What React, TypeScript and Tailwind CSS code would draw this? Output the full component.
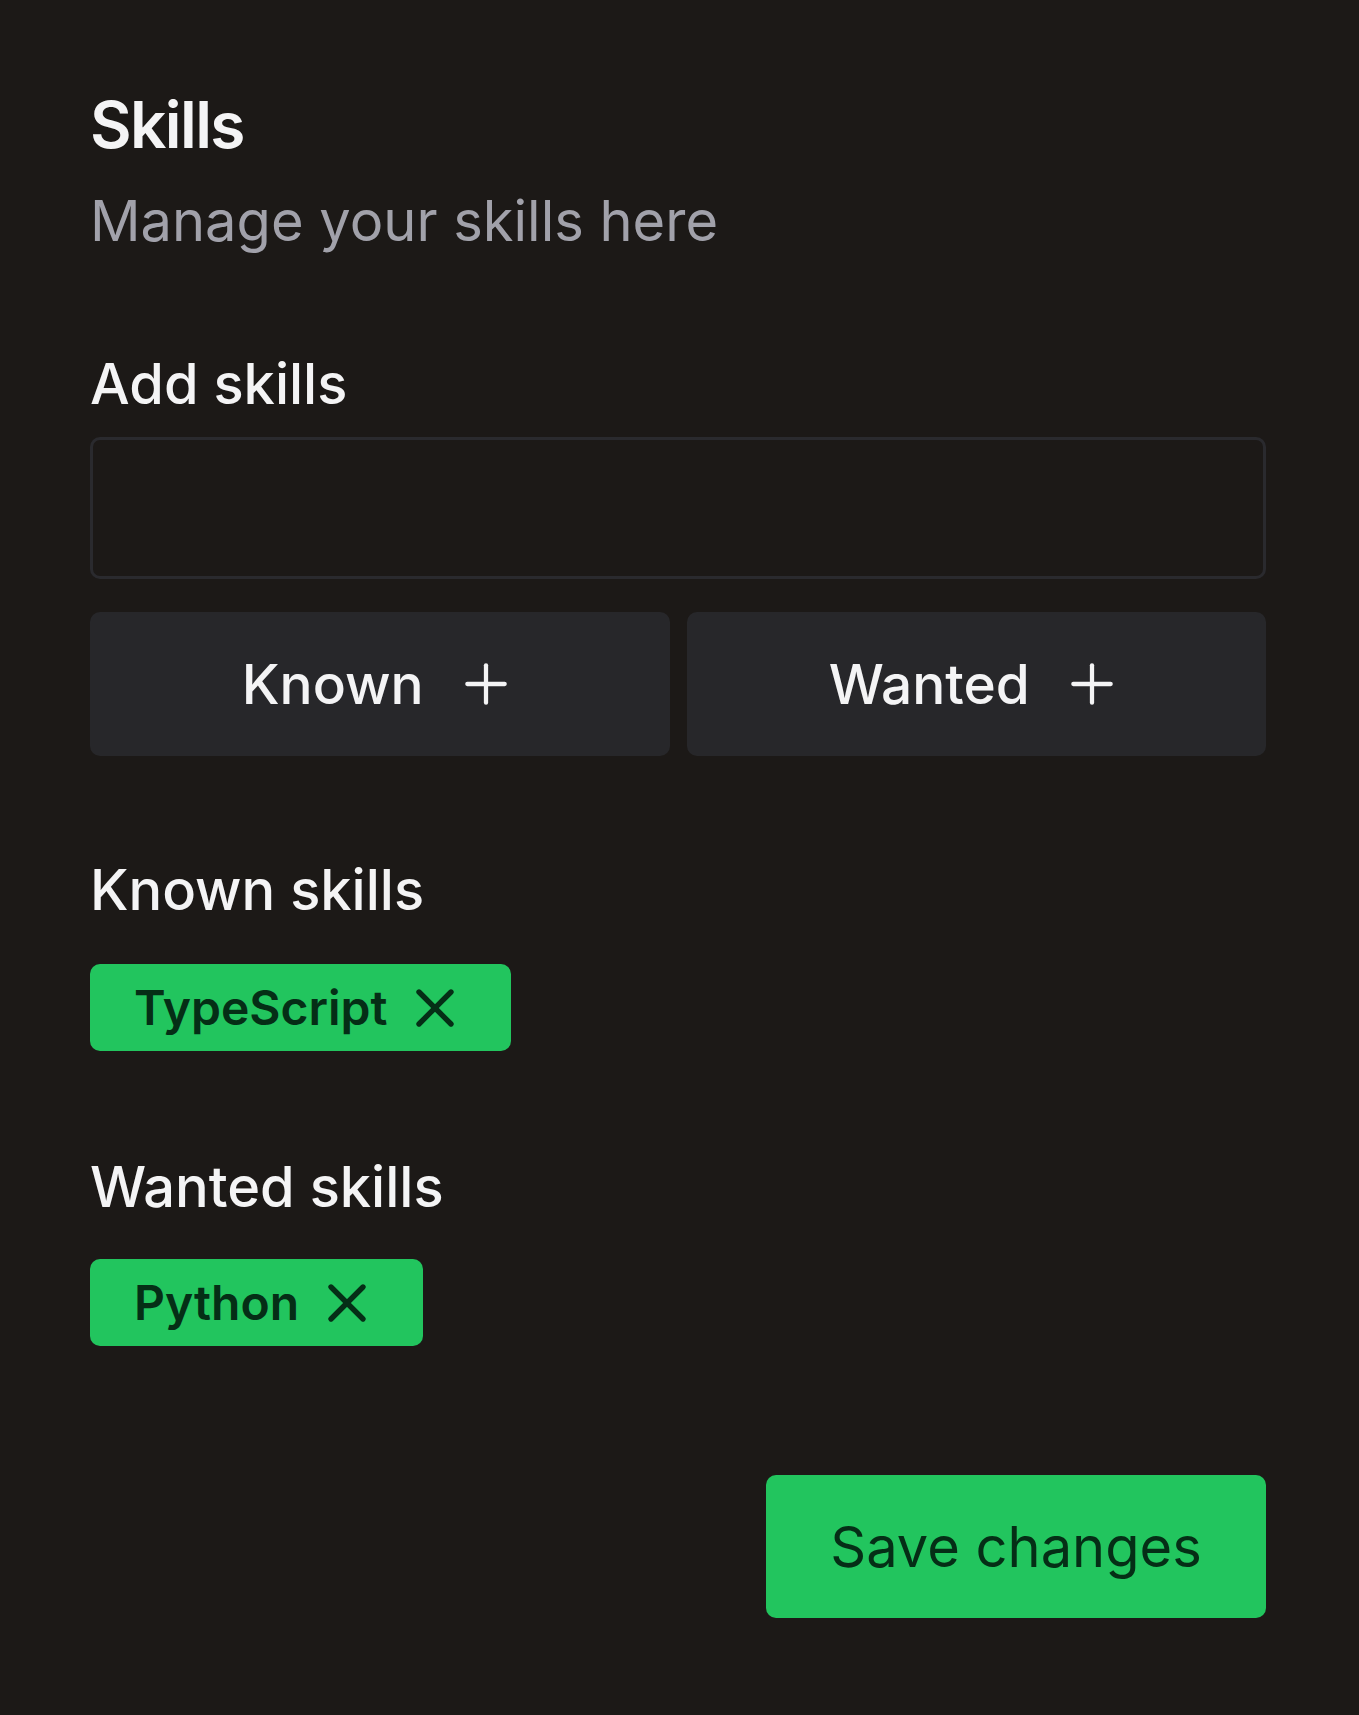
import React from "react";

function XIcon() {
  return (
    <svg width="64" height="64" viewBox="0 0 24 24" fill="none" stroke="currentColor" strokeWidth="2" strokeLinecap="round" strokeLinejoin="round">
      <path d="M18 6 6 18" />
      <path d="m6 6 12 12" />
    </svg>
  );
}

function PlusIcon() {
  return (
    <svg width="64" height="64" viewBox="0 0 24 24" fill="none" stroke="currentColor" strokeWidth="1.6" strokeLinecap="round" strokeLinejoin="round">
      <path d="M5 12h14" />
      <path d="M12 5v14" />
    </svg>
  );
}

function Tag({ label }: { label: string }) {
  return (
    <div className="inline-flex h-[87px] items-center gap-[16px] rounded-[10px] bg-[#22c55e] pl-[44px] pr-[44px] text-[#052e16]">
      <span className="text-[48px] font-semibold leading-none">{label}</span>
      <XIcon />
    </div>
  );
}

export default function App() {
  return (
    <div
      className="min-h-[1715px] w-full bg-[#1c1917] pl-[90px] pr-[93px] pt-[93px] text-[#f4f4f5]"
      style={{ fontFamily: "Inter, 'Noto Sans', sans-serif" }}
    >
      <h1 className="text-[64px] font-semibold leading-none tracking-[-0.025em]">Skills</h1>
      <p className="mt-[36px] text-[56px] leading-none text-[#a1a1aa]">Manage your skills here</p>

      <h2 className="mt-[107px] text-[56px] font-medium leading-none">Add skills</h2>
      <div className="mt-[25px] h-[142px] rounded-[10px] border-[3px] border-[#2a2a2e]" />

      <div className="mt-[33px] grid grid-cols-2 gap-[17px]">
        <button className="flex h-[144px] items-center justify-center gap-[30px] rounded-[10px] bg-[#27272a] text-[55px] font-medium leading-none text-[#f4f4f5]">
          <span>Known</span>
          <PlusIcon />
        </button>
        <button className="flex h-[144px] items-center justify-center gap-[30px] rounded-[10px] bg-[#27272a] text-[55px] font-medium leading-none text-[#f4f4f5]">
          <span>Wanted</span>
          <PlusIcon />
        </button>
      </div>

      <h2 className="mt-[106px] text-[56px] font-medium leading-none">Known skills</h2>
      <div className="mt-[46px] flex flex-wrap gap-3">
        <Tag label="TypeScript" />
      </div>

      <h2 className="mt-[108px] text-[56px] font-medium leading-none">Wanted skills</h2>
      <div className="mt-[44px] flex flex-wrap gap-3">
        <Tag label="Python" />
      </div>

      <div className="mt-[129px] flex justify-end">
        <button className="flex h-[143px] w-[500px] items-center justify-center rounded-[10px] bg-[#22c55e] text-[56px] font-normal leading-none text-[#052e16]">
          Save changes
        </button>
      </div>
    </div>
  );
}
